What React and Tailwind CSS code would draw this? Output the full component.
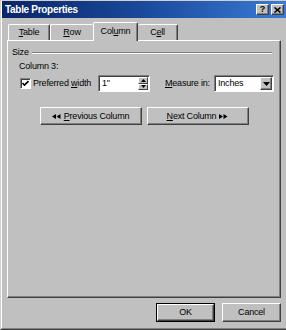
export default function App() {
  const U = ({ children }) => (
    <span className="underline underline-offset-[1px] decoration-1">{children}</span>
  );
  return (
    <div className="w-[286px] h-[330px] bg-[#c0c0c0] border-l border-t border-b border-l-[#d4d0c8] border-t-[#d4d0c8] border-b-[#404040] flex flex-col font-['Liberation_Sans',Arial,sans-serif] text-[9px] tracking-[-0.2px] text-black select-none overflow-hidden">
      <div className="flex-1 flex flex-col border-l border-l-white border-b border-b-[#808080]">
        {/* Title bar */}
        <div className="h-[17px] flex items-center justify-between pl-[3px] pr-[2px] bg-linear-to-r from-[#0a246a] via-[#1a4a9c] to-[#3a7bd5]">
          <span className="font-bold text-[10px] tracking-[-0.3px] text-white leading-none">Table Properties</span>
          <div className="flex gap-[2px]">
            <div className="w-[13px] h-[11px] bg-[#c0c0c0] border border-t-white border-l-white border-r-[#404040] border-b-[#404040] shadow-[inset_-1px_-1px_#808080] flex items-center justify-center">
              <span className="font-bold text-[9px] leading-none tracking-normal">?</span>
            </div>
            <div className="w-[13px] h-[11px] bg-[#c0c0c0] border border-t-white border-l-white border-r-[#404040] border-b-[#404040] shadow-[inset_-1px_-1px_#808080] flex items-center justify-center">
              <svg width="7" height="6" viewBox="0 0 7 6">
                <path d="M0.5 0.5 L6.5 5.5 M6.5 0.5 L0.5 5.5" stroke="black" strokeWidth="1.6" />
              </svg>
            </div>
          </div>
        </div>

        {/* Tabs */}
        <div className="mt-[4px] h-[18px] flex items-end pl-[6px]">
          <div className="w-[42px] h-[16px] border-t border-l border-r border-t-white border-l-white border-r-[#404040] rounded-t-[2px] shadow-[inset_-1px_0_#808080] flex items-center justify-center leading-none">
            <span><U>T</U>able</span>
          </div>
          <div className="w-[43px] h-[16px] border-t border-l border-t-white border-l-white rounded-t-[2px] flex items-center justify-center leading-none">
            <span><U>R</U>ow</span>
          </div>
          <div className="relative z-10 -mb-px w-[45px] h-[19px] bg-[#c0c0c0] border-t border-l border-r border-t-white border-l-white border-r-[#404040] rounded-t-[2px] shadow-[inset_-1px_0_#808080] flex items-center justify-center leading-none pb-[2px]">
            <span>Col<U>u</U>mn</span>
          </div>
          <div className="w-[40px] h-[16px] border-t border-r border-t-white border-r-[#404040] rounded-t-[2px] shadow-[inset_-1px_0_#808080] flex items-center justify-center leading-none">
            <span>C<U>e</U>ll</span>
          </div>
        </div>

        {/* Panel */}
        <div className="ml-[5px] w-[274px] h-[258px] border border-t-white border-l-white border-r-[#404040] border-b-[#404040] shadow-[inset_-1px_-1px_#808080] flex flex-col">
          <div className="mt-[6px] h-[11px] flex items-center pl-[4px] pr-[8px] leading-[11px]">
            <span>Size</span>
            <div className="flex-1 ml-[3px] h-[2px] border-t border-t-[#808080] border-b border-b-white" />
          </div>
          <div className="mt-[3px] pl-[11px] leading-[11px]">Column 3:</div>
          <div className="mt-[3px] h-[17px] flex items-center pl-[12px]">
            <div className="w-[11px] h-[11px] bg-white border border-t-[#808080] border-l-[#808080] border-r-white border-b-white shadow-[inset_1px_1px_#404040] flex items-center justify-center">
              <svg width="7" height="7" viewBox="0 0 7 7">
                <path d="M0.5 3 L2.5 5 L6.5 1" stroke="black" strokeWidth="1.6" fill="none" />
              </svg>
            </div>
            <span className="ml-[2px] w-[65px] leading-none">Preferred <U>w</U>idth</span>
            <div className="w-[52px] h-[17px] bg-white border border-t-[#808080] border-l-[#808080] border-r-white border-b-white shadow-[inset_1px_1px_#404040] flex">
              <span className="flex-1 pl-[3px] pt-[3px] leading-none">1"</span>
              <div className="w-[11px] flex flex-col py-[1px] pr-[1px]">
                <div className="flex-1 bg-[#c0c0c0] border border-t-white border-l-white border-r-[#404040] border-b-[#404040] flex items-center justify-center">
                  <svg width="5" height="3" viewBox="0 0 5 3"><path d="M0 3 L2.5 0 L5 3 Z" fill="black" /></svg>
                </div>
                <div className="flex-1 bg-[#c0c0c0] border border-t-white border-l-white border-r-[#404040] border-b-[#404040] flex items-center justify-center">
                  <svg width="5" height="3" viewBox="0 0 5 3"><path d="M0 0 L2.5 3 L5 0 Z" fill="black" /></svg>
                </div>
              </div>
            </div>
            <span className="ml-[15px] w-[49px] leading-none"><U>M</U>easure in:</span>
            <div className="w-[60px] h-[17px] bg-white border border-t-[#808080] border-l-[#808080] border-r-white border-b-white shadow-[inset_1px_1px_#404040] flex">
              <span className="flex-1 pl-[3px] pt-[3px] leading-none">Inches</span>
              <div className="w-[12px] my-[1px] mr-[1px] bg-[#c0c0c0] border border-t-white border-l-white border-r-[#404040] border-b-[#404040] shadow-[inset_-1px_-1px_#808080] flex items-center justify-center">
                <svg width="7" height="4" viewBox="0 0 7 4"><path d="M0 0 L3.5 4 L7 0 Z" fill="black" /></svg>
              </div>
            </div>
          </div>
          <div className="mt-[15px] flex justify-center gap-[5px]">
            <div className="w-[102px] h-[18px] border border-t-white border-l-white border-r-[#404040] border-b-[#404040] shadow-[inset_-1px_-1px_#808080] flex items-center justify-center leading-none">
              <svg width="9" height="5" viewBox="0 0 9 5" className="mr-[3px]">
                <path d="M0 2.5 L4 0 L4 5 Z M4.5 2.5 L8.5 0 L8.5 5 Z" fill="black" />
              </svg>
              <span><U>P</U>revious Column</span>
            </div>
            <div className="w-[102px] h-[18px] border border-t-white border-l-white border-r-[#404040] border-b-[#404040] shadow-[inset_-1px_-1px_#808080] flex items-center justify-center leading-none">
              <span><U>N</U>ext Column</span>
              <svg width="9" height="5" viewBox="0 0 9 5" className="ml-[3px]">
                <path d="M0 0 L4 2.5 L0 5 Z M4.5 0 L8.5 2.5 L4.5 5 Z" fill="black" />
              </svg>
            </div>
          </div>
        </div>

        {/* Bottom buttons */}
        <div className="mt-[5px] flex justify-end pr-[5px] gap-[7px]">
          <div className="w-[59px] h-[19px] border border-black flex">
            <div className="flex-1 border border-t-white border-l-white border-r-[#404040] border-b-[#404040] shadow-[inset_-1px_-1px_#808080] flex items-center justify-center leading-none">
              OK
            </div>
          </div>
          <div className="w-[59px] h-[19px] border border-t-white border-l-white border-r-[#404040] border-b-[#404040] shadow-[inset_-1px_-1px_#808080] flex items-center justify-center leading-none">
            Cancel
          </div>
        </div>
      </div>
    </div>
  );
}
